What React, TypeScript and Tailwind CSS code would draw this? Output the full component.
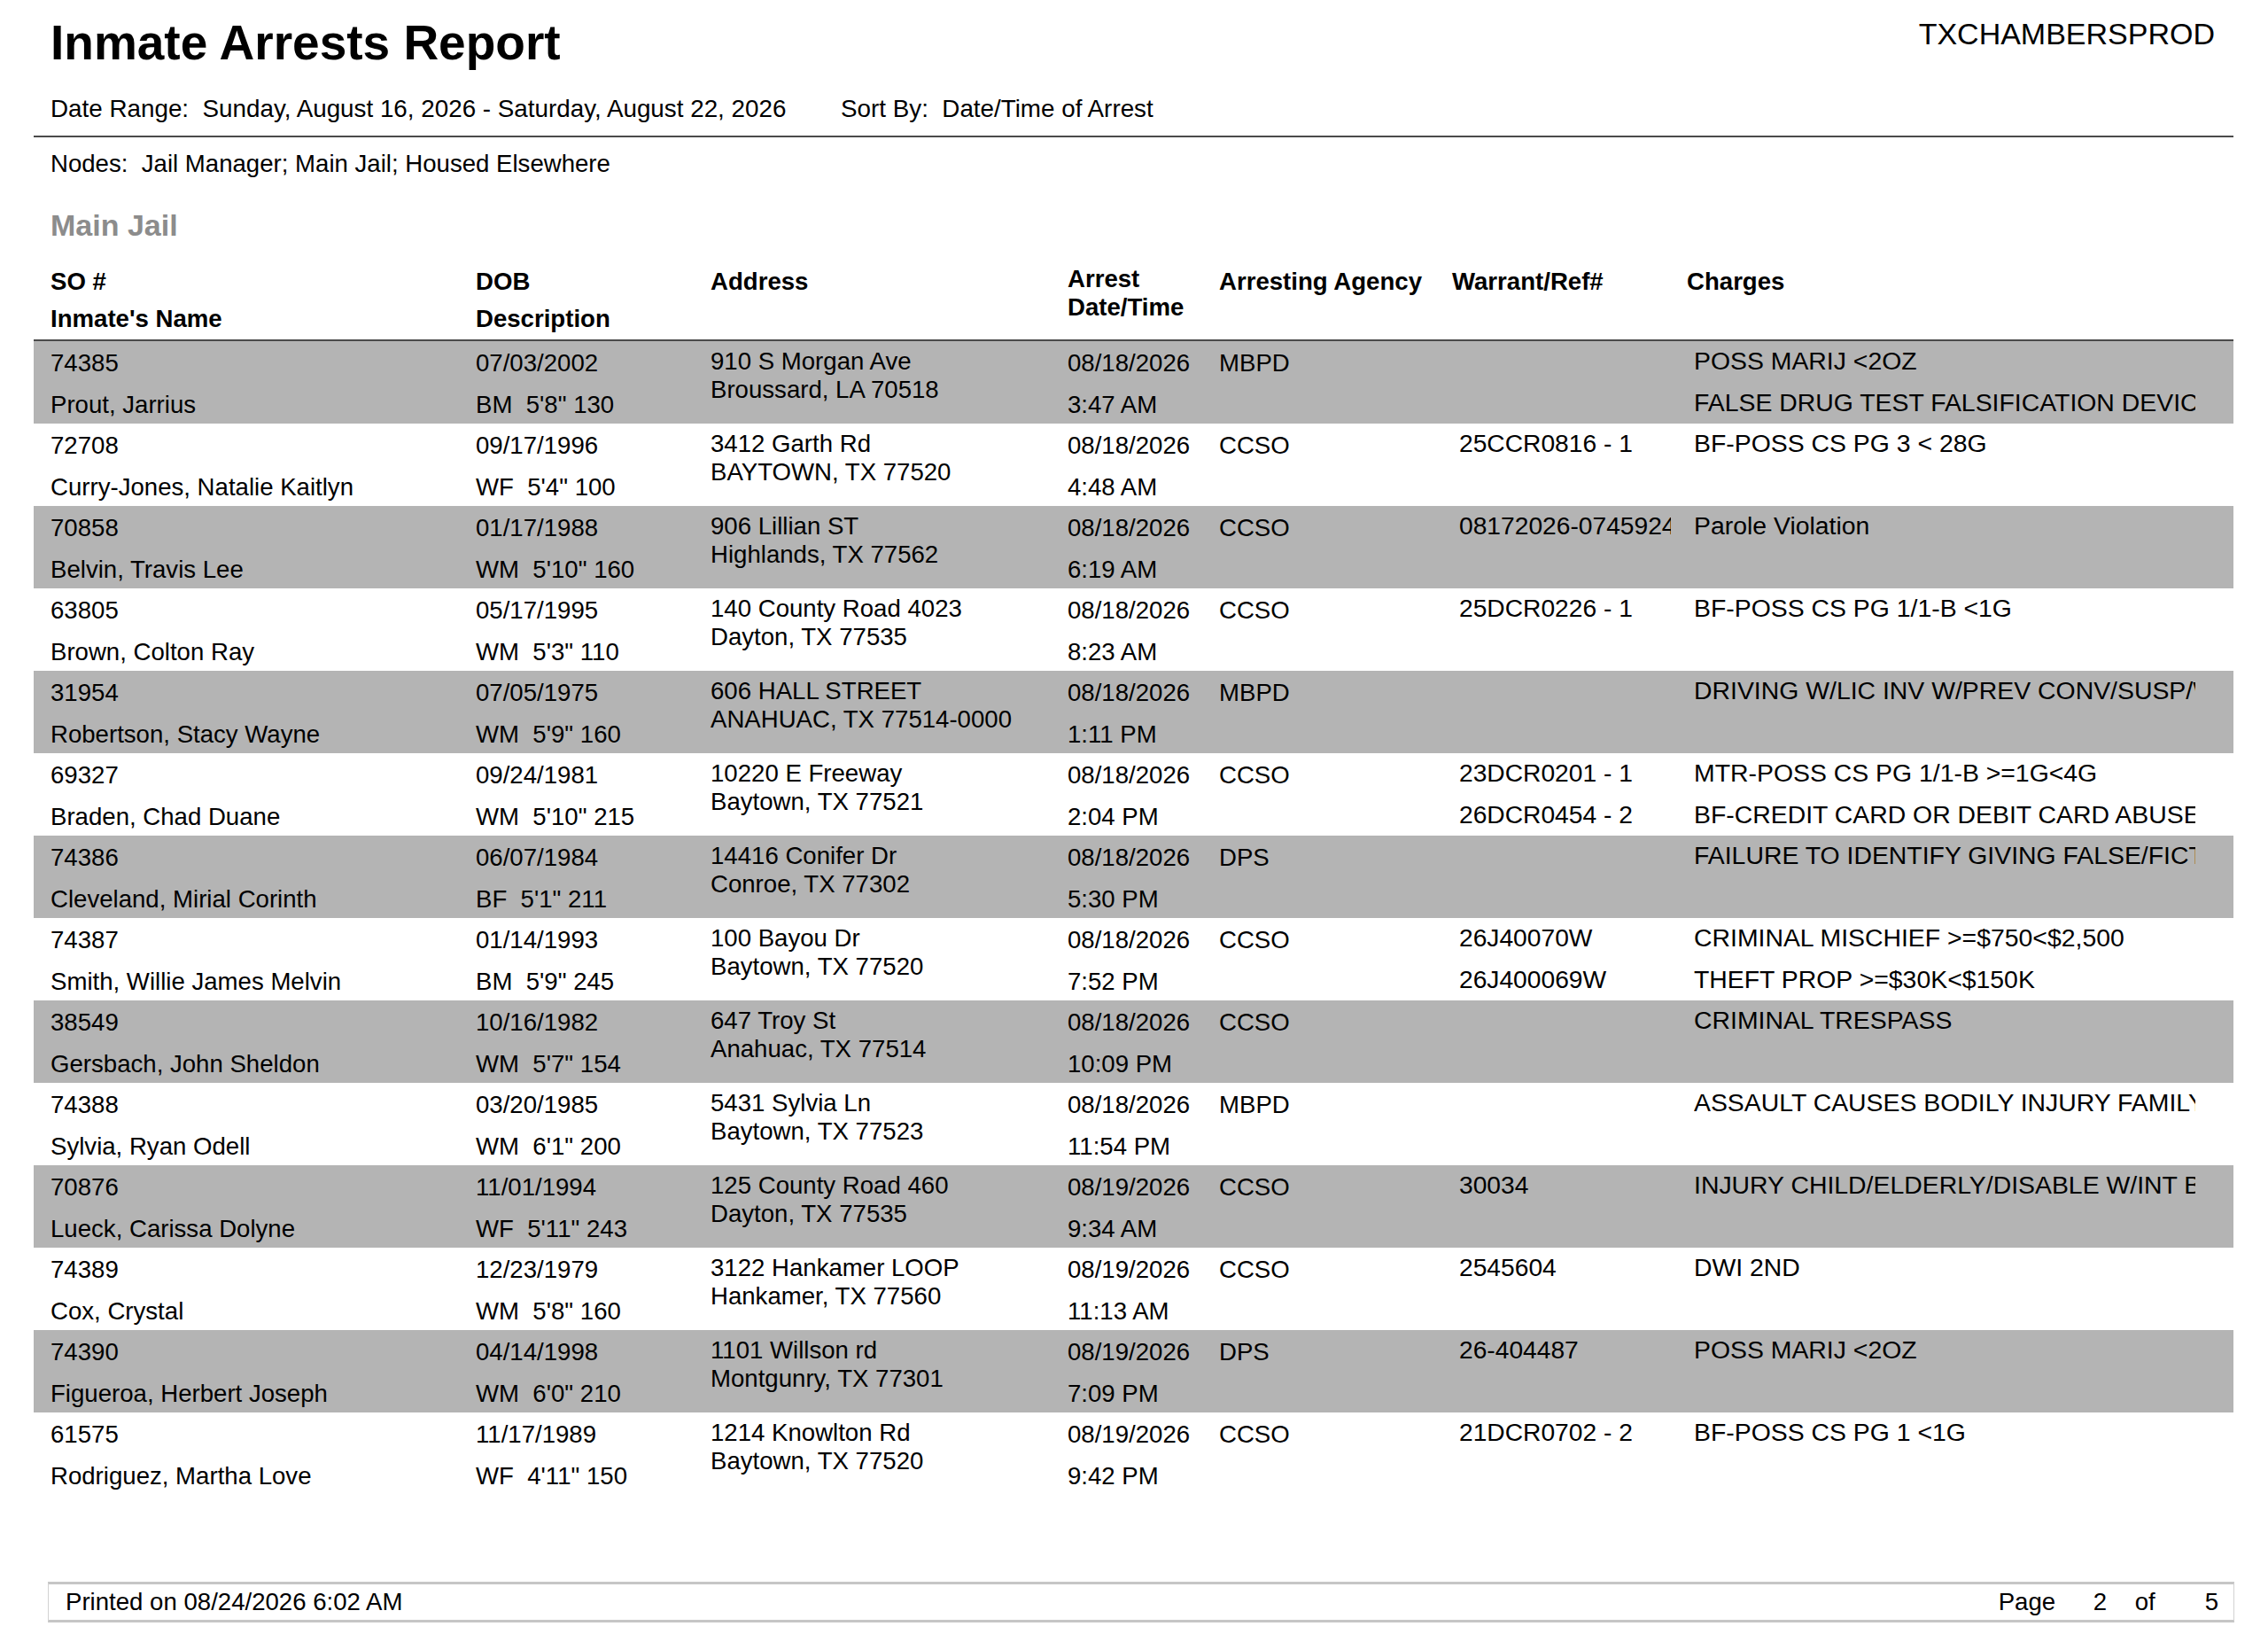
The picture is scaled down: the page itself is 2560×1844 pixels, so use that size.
type Arrest = {
  so: string;
  name: string;
  dob: string;
  desc: string;
  addr: [string, string];
  date: string;
  time: string;
  agency: string;
  warrants: string[];
  charges: string[];
};

const ROWS: Arrest[] = [
  { so: "74385", name: "Prout, Jarrius", dob: "07/03/2002", desc: 'BM  5\'8" 130', addr: ["910 S Morgan Ave", "Broussard, LA 70518"], date: "08/18/2026", time: "3:47 AM", agency: "MBPD", warrants: [], charges: ["POSS MARIJ <2OZ", "FALSE DRUG TEST FALSIFICATION DEVICE"] },
  { so: "72708", name: "Curry-Jones, Natalie Kaitlyn", dob: "09/17/1996", desc: 'WF  5\'4" 100', addr: ["3412 Garth Rd", "BAYTOWN, TX 77520"], date: "08/18/2026", time: "4:48 AM", agency: "CCSO", warrants: ["25CCR0816 - 1"], charges: ["BF-POSS CS PG 3 < 28G"] },
  { so: "70858", name: "Belvin, Travis Lee", dob: "01/17/1988", desc: 'WM  5\'10" 160', addr: ["906 Lillian ST", "Highlands, TX 77562"], date: "08/18/2026", time: "6:19 AM", agency: "CCSO", warrants: ["08172026-07459245"], charges: ["Parole Violation"] },
  { so: "63805", name: "Brown, Colton Ray", dob: "05/17/1995", desc: 'WM  5\'3" 110', addr: ["140 County Road 4023", "Dayton, TX 77535"], date: "08/18/2026", time: "8:23 AM", agency: "CCSO", warrants: ["25DCR0226 - 1"], charges: ["BF-POSS CS PG 1/1-B <1G"] },
  { so: "31954", name: "Robertson, Stacy Wayne", dob: "07/05/1975", desc: 'WM  5\'9" 160', addr: ["606 HALL STREET", "ANAHUAC, TX 77514-0000"], date: "08/18/2026", time: "1:11 PM", agency: "MBPD", warrants: [], charges: ["DRIVING W/LIC INV W/PREV CONV/SUSP/W/O FIN RES"] },
  { so: "69327", name: "Braden, Chad Duane", dob: "09/24/1981", desc: 'WM  5\'10" 215', addr: ["10220 E Freeway", "Baytown, TX 77521"], date: "08/18/2026", time: "2:04 PM", agency: "CCSO", warrants: ["23DCR0201 - 1", "26DCR0454 - 2"], charges: ["MTR-POSS CS PG 1/1-B >=1G<4G", "BF-CREDIT CARD OR DEBIT CARD ABUSE"] },
  { so: "74386", name: "Cleveland, Mirial Corinth", dob: "06/07/1984", desc: 'BF  5\'1" 211', addr: ["14416 Conifer Dr", "Conroe, TX 77302"], date: "08/18/2026", time: "5:30 PM", agency: "DPS", warrants: [], charges: ["FAILURE TO IDENTIFY GIVING FALSE/FICTITIOUS INFO"] },
  { so: "74387", name: "Smith, Willie James Melvin", dob: "01/14/1993", desc: 'BM  5\'9" 245', addr: ["100 Bayou Dr", "Baytown, TX 77520"], date: "08/18/2026", time: "7:52 PM", agency: "CCSO", warrants: ["26J40070W", "26J400069W"], charges: ["CRIMINAL MISCHIEF >=$750<$2,500", "THEFT PROP >=$30K<$150K"] },
  { so: "38549", name: "Gersbach, John Sheldon", dob: "10/16/1982", desc: 'WM  5\'7" 154', addr: ["647 Troy St", "Anahuac, TX 77514"], date: "08/18/2026", time: "10:09 PM", agency: "CCSO", warrants: [], charges: ["CRIMINAL TRESPASS"] },
  { so: "74388", name: "Sylvia, Ryan Odell", dob: "03/20/1985", desc: 'WM  6\'1" 200', addr: ["5431 Sylvia Ln", "Baytown, TX 77523"], date: "08/18/2026", time: "11:54 PM", agency: "MBPD", warrants: [], charges: ["ASSAULT CAUSES BODILY INJURY FAMILY VIOLENCE"] },
  { so: "70876", name: "Lueck, Carissa Dolyne", dob: "11/01/1994", desc: 'WF  5\'11" 243', addr: ["125 County Road 460", "Dayton, TX 77535"], date: "08/19/2026", time: "9:34 AM", agency: "CCSO", warrants: ["30034"], charges: ["INJURY CHILD/ELDERLY/DISABLE W/INT BODILY INJ"] },
  { so: "74389", name: "Cox, Crystal", dob: "12/23/1979", desc: 'WM  5\'8" 160', addr: ["3122 Hankamer LOOP", "Hankamer, TX 77560"], date: "08/19/2026", time: "11:13 AM", agency: "CCSO", warrants: ["2545604"], charges: ["DWI 2ND"] },
  { so: "74390", name: "Figueroa, Herbert Joseph", dob: "04/14/1998", desc: 'WM  6\'0" 210', addr: ["1101 Willson rd", "Montgunry, TX 77301"], date: "08/19/2026", time: "7:09 PM", agency: "DPS", warrants: ["26-404487"], charges: ["POSS MARIJ <2OZ"] },
  { so: "61575", name: "Rodriguez, Martha Love", dob: "11/17/1989", desc: 'WF  4\'11" 150', addr: ["1214 Knowlton Rd", "Baytown, TX 77520"], date: "08/19/2026", time: "9:42 PM", agency: "CCSO", warrants: ["21DCR0702 - 2"], charges: ["BF-POSS CS PG 1 <1G"] },
];

function TwoLine({ top, bottom }: { top: string; bottom?: string }) {
  return (
    <div className="flex flex-col pt-[10px] leading-[30px] whitespace-pre">
      <div className="h-[47px] shrink-0">{top}</div>
      {bottom && <div className="shrink-0">{bottom}</div>}
    </div>
  );
}

function Row({ r, shaded }: { r: Arrest; shaded: boolean }) {
  return (
    <div
      className={`grid h-[93px] grid-cols-[480px_265px_403px_171px_271px_265px_566px] overflow-hidden pl-[19px] ${
        shaded ? "bg-[#b4b4b4]" : "bg-white"
      }`}
    >
      <TwoLine top={r.so} bottom={r.name} />
      <TwoLine top={r.dob} bottom={r.desc} />
      <div className="flex flex-col pt-[7px] leading-[32px] whitespace-nowrap">
        <div>{r.addr[0]}</div>
        <div>{r.addr[1]}</div>
      </div>
      <TwoLine top={r.date} bottom={r.time} />
      <TwoLine top={r.agency} />
      <div className="flex w-[239px] flex-col overflow-hidden pt-[7px] text-[28.2px] leading-[30px] whitespace-nowrap">
        {r.warrants.map((w) => (
          <div key={w} className="h-[47px] shrink-0">
            {w}
          </div>
        ))}
      </div>
      <div className="flex flex-col overflow-hidden pt-[7px] text-[28.4px] leading-[30px] whitespace-nowrap">
        {r.charges.map((c) => (
          <div key={c} className="h-[47px] shrink-0">
            {c}
          </div>
        ))}
      </div>
    </div>
  );
}

export default function App() {
  return (
    <div className="flex h-[1844px] w-[2560px] flex-col bg-white font-['Liberation_Sans',Arial,sans-serif] text-[27.6px] text-black">
      <div className="flex items-start justify-between pt-[21px] pl-[57px] pr-[60px]">
        <h1 className="text-[55px] leading-[55px] font-bold">Inmate Arrests Report</h1>
        <div className="text-[34px] leading-[34px]">TXCHAMBERSPROD</div>
      </div>

      <div className="mt-[32px] flex pl-[57px] text-[27.8px] leading-[30px] whitespace-pre">
        <span className="w-[892px]">Date Range:  Sunday, August 16, 2026 - Saturday, August 22, 2026</span>
        <span>Sort By:  Date/Time of Arrest</span>
      </div>

      <div className="mt-[15px] ml-[38px] h-[2px] w-[2483px] bg-[#4a4a4a]" />

      <div className="mt-[15px] pl-[57px] leading-[30px] whitespace-pre">
        Nodes:  Jail Manager; Main Jail; Housed Elsewhere
      </div>

      <div className="mt-[34px] pl-[57px] text-[34px] leading-[40px] font-bold text-[#8c8c8c]">
        Main Jail
      </div>

      <div className="mt-[23px] grid h-[86px] grid-cols-[480px_265px_403px_171px_263px_265px_1fr] pl-[57px] font-bold">
        <div className="leading-[42px]">
          <div>SO #</div>
          <div>Inmate's Name</div>
        </div>
        <div className="leading-[42px]">
          <div>DOB</div>
          <div>Description</div>
        </div>
        <div className="leading-[42px]">Address</div>
        <div className="pt-[2px] leading-[32px]">
          <div>Arrest</div>
          <div>Date/Time</div>
        </div>
        <div className="leading-[42px]">Arresting Agency</div>
        <div className="leading-[42px]">Warrant/Ref#</div>
        <div className="leading-[42px]">Charges</div>
      </div>

      <div className="ml-[38px] w-[2483px]">
        <div className="h-[2px] bg-[#4a4a4a]" />
        {ROWS.map((r, i) => (
          <Row key={r.so} r={r} shaded={i % 2 === 0} />
        ))}
      </div>

      <div className="mt-[98px] ml-[54px] flex h-[46px] w-[2468px] items-center border-x border-y-[3px] border-x-[#d2d2d2] border-y-[#c6c6c6] pl-[19px] pr-[17px] leading-[30px]">
        <span>Printed on 08/24/2026 6:02 AM</span>
        <div className="ml-auto flex">
          <span className="w-[107px]">Page</span>
          <span className="w-[47px]">2</span>
          <span className="w-[79px]">of</span>
          <span>5</span>
        </div>
      </div>
    </div>
  );
}
